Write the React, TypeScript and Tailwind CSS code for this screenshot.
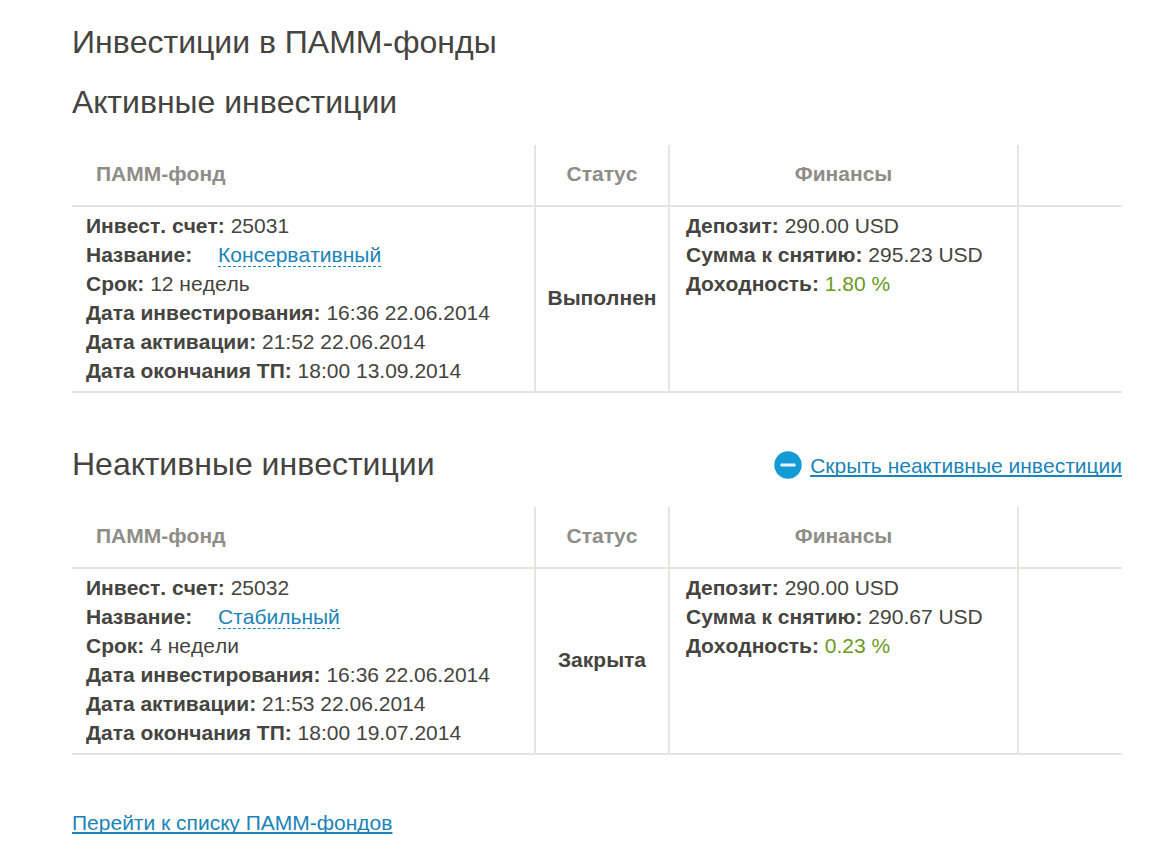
import { useState } from 'react';

/* ===================================================================== */
/*
🧩 PAMM INVESTMENTS - Active and inactive investments of the client
💾 DATA
    - activeInvestments, inactiveInvestments
📊 STATES
    - showInactive
*/

type Investment = {
    account: string;
    name: string;
    term: string;
    investedAt: string;
    activatedAt: string;
    endsAt: string;
    status: string;
    deposit: string;
    withdrawable: string;
    profit: string;
};

const activeInvestments: Investment[] = [
    {
        account: '25031',
        name: 'Консервативный',
        term: '12 недель',
        investedAt: '16:36 22.06.2014',
        activatedAt: '21:52 22.06.2014',
        endsAt: '18:00 13.09.2014',
        status: 'Выполнен',
        deposit: '290.00 USD',
        withdrawable: '295.23 USD',
        profit: '1.80 %',
    },
];

const inactiveInvestments: Investment[] = [
    {
        account: '25032',
        name: 'Стабильный',
        term: '4 недели',
        investedAt: '16:36 22.06.2014',
        activatedAt: '21:53 22.06.2014',
        endsAt: '18:00 19.07.2014',
        status: 'Закрыта',
        deposit: '290.00 USD',
        withdrawable: '290.67 USD',
        profit: '0.23 %',
    },
];

const InvestmentsTable: React.FC<{ items: Investment[] }> = ({ items }) => {
    return (
        <table className="mt-[25px] w-full table-fixed border-separate border-spacing-0">
            <thead>
                <tr className="h-[62px] text-[#8e8d87]">
                    <th className="border-b-2 border-[#e5e5e4] pt-0 pr-3 pb-1 pl-6 text-left font-bold">
                        ПАММ-фонд
                    </th>
                    <th className="w-[134px] border-b-2 border-l-2 border-[#e5e5e4] pb-1 font-bold">
                        Статус
                    </th>
                    <th className="w-[349px] border-b-2 border-l-2 border-[#e5e5e4] pb-1 font-bold">
                        Финансы
                    </th>
                    <td className="w-[105px] border-b-2 border-l-2 border-[#e5e5e4]" />
                </tr>
            </thead>
            <tbody>
                {items.map((item) => (
                    <tr key={item.account}>
                        <td className="border-b-2 border-[#e5e5e4] pt-1 pr-3 pb-[6px] pl-[14px] align-top">
                            <p>
                                <b>Инвест. счет:</b> {item.account}
                            </p>
                            <p>
                                <b>Название:</b>{' '}
                                <a
                                    href="#fund"
                                    className="ml-5 border-b border-dashed border-[#1a84b8] text-[#1a84b8]"
                                >
                                    {item.name}
                                </a>
                            </p>
                            <p>
                                <b>Срок:</b> {item.term}
                            </p>
                            <p>
                                <b>Дата инвестирования:</b> {item.investedAt}
                            </p>
                            <p>
                                <b>Дата активации:</b> {item.activatedAt}
                            </p>
                            <p>
                                <b>Дата окончания ТП:</b> {item.endsAt}
                            </p>
                        </td>
                        <td className="border-b-2 border-l-2 border-[#e5e5e4] pb-1 text-center align-middle font-bold">
                            {item.status}
                        </td>
                        <td className="border-b-2 border-l-2 border-[#e5e5e4] pt-1 pl-4 align-top">
                            <p>
                                <b>Депозит:</b> {item.deposit}
                            </p>
                            <p>
                                <b>Сумма к снятию:</b> {item.withdrawable}
                            </p>
                            <p>
                                <b>Доходность:</b>{' '}
                                <span className="text-[#6a9a22]">{item.profit}</span>
                            </p>
                        </td>
                        <td className="border-b-2 border-l-2 border-[#e5e5e4]" />
                    </tr>
                ))}
            </tbody>
        </table>
    );
};

const App: React.FC = () => {
    const [showInactive, setShowInactive] = useState(true);

    return (
        <main className="bg-white pt-6 pr-[27px] pb-6 pl-[72px] font-['Liberation_Sans',Arial,sans-serif] text-[21px] leading-[29px] text-[#454440] [font-kerning:none]">
            <h1 className="text-[32px] leading-9">Инвестиции в ПАММ-фонды</h1>

            <section className="mt-6">
                <h2 className="text-[32px] leading-9">Активные инвестиции</h2>
                <InvestmentsTable items={activeInvestments} />
            </section>

            <section className="mt-[53px]">
                <div className="flex items-center justify-between">
                    <h2 className="text-[32px] leading-9">Неактивные инвестиции</h2>
                    <button
                        type="button"
                        onClick={() => setShowInactive(!showInactive)}
                        className="mt-0.5 flex cursor-pointer items-center gap-2 text-[#1a84b8]"
                    >
                        <svg viewBox="0 0 28 28" className="h-7 w-7" aria-hidden="true">
                            <circle cx="14" cy="14" r="13.7" fill="#139bd5" />
                            <rect x="6.5" y="12.6" width="15" height="2.8" rx="0.6" fill="#e8f6fc" />
                            {!showInactive && (
                                <rect x="12.6" y="6.5" width="2.8" height="15" rx="0.6" fill="#e8f6fc" />
                            )}
                        </svg>
                        <span className="underline decoration-2 underline-offset-2 [text-decoration-skip-ink:none]">
                            {showInactive ? 'Скрыть' : 'Показать'} неактивные инвестиции
                        </span>
                    </button>
                </div>
                {showInactive && <InvestmentsTable items={inactiveInvestments} />}
            </section>

            <a
                href="#funds"
                className="mt-[53px] inline-block text-[#1a84b8] underline decoration-2 underline-offset-2 [text-decoration-skip-ink:none]"
            >
                Перейти к списку ПАММ-фондов
            </a>
        </main>
    );
};

export default App;
